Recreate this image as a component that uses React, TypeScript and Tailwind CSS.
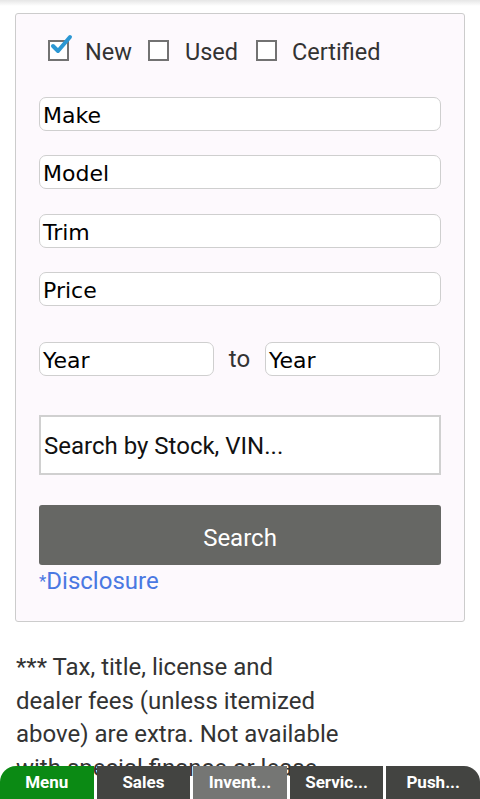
import React from "react";

const roboto = { fontFamily: "Roboto, 'Noto Sans', sans-serif" };
const dejavu = { fontFamily: "'DejaVu Sans', sans-serif" };

function Box({ checked }: { checked?: boolean }) {
  return (
    <span className="relative inline-block w-[21px] h-[22px] shrink-0">
      <span className="absolute left-0 top-[2px] w-[21px] h-[21px] border-2 border-[#727272] bg-white" />
      {checked && (
        <svg className="absolute left-[2px] top-[-6px]" width="24" height="24" viewBox="0 0 24 24">
          <path d="M3 14 L8 19 L20 5" fill="none" stroke="#2b97d3" strokeWidth="4" strokeLinecap="round" strokeLinejoin="round" />
        </svg>
      )}
    </span>
  );
}

function Field({ label, className = "" }: { label: string; className?: string }) {
  return (
    <div
      className={`h-[34px] border border-[#cfcfcf] rounded-[7px] bg-white flex items-center pl-[3px] pt-[2px] text-[22px] text-black ${className}`}
      style={dejavu}
    >
      {label}
    </div>
  );
}

export default function App() {
  return (
    <div className="w-[480px] h-[799px] bg-white relative overflow-hidden" style={roboto}>
      <div className="h-[6px] bg-gradient-to-b from-[#e6e6e6] to-white" />
      <div className="mx-[15px] mt-[7px] h-[609px] border border-[#cccccc] rounded-[3px] bg-[#fdf9fd] px-[23px] pt-[24px]">
        <div className="flex items-center h-[30px] text-[23.5px] text-[#333333]">
          <span className="ml-[9px]"><Box checked /></span>
          <span className="ml-[16px]">New</span>
          <span className="ml-[16px]"><Box /></span>
          <span className="ml-[16px]">Used</span>
          <span className="ml-[18px]"><Box /></span>
          <span className="ml-[15px]">Certified</span>
        </div>
        <div className="mt-[29px] flex flex-col gap-[24px]">
          <Field label="Make" />
          <Field label="Model" />
          <Field label="Trim" className="mt-[1px]" />
          <Field label="Price" />
        </div>
        <div className="mt-[35px] flex items-center">
          <Field label="Year" className="w-[175px]" />
          <span className="w-[51px] text-center text-[24px] text-[#333333]">to</span>
          <Field label="Year" className="w-[175px]" />
        </div>
        <div className="mt-[38px] h-[60px] border-2 border-[#d0d0d0] bg-white flex items-center pl-[3px] pt-[1px] text-[24px] text-[#111111]">
          Search by Stock, VIN...
        </div>
        <button className="mt-[30px] w-full h-[60px] bg-[#666764] rounded-[3px] text-white text-[24px] pt-[5px]" style={roboto}>
          Search
        </button>
        <div className="text-[24px] leading-[32px] text-[#4a78e2]">
          <span className="text-[17px] align-[2px]">*</span>Disclosure
        </div>
      </div>
      <div className="mt-[29px] pl-[16px] text-[24px] leading-[33.5px] text-[#333333]">
        *** Tax, title, license and<br />
        dealer fees (unless itemized<br />
        above) are extra. Not available<br />
        with special finance or lease
      </div>
      <div className="absolute left-0 bottom-0 w-[480px] h-[33px] flex gap-[3px] text-white font-bold text-[17px]">
        <div className="flex-1 bg-[#0b8a14] rounded-tl-[16px] flex items-center justify-center">Menu</div>
        <div className="flex-1 bg-[#434441] flex items-center justify-center">Sales</div>
        <div className="flex-1 bg-[#757674] flex items-center justify-center">Invent...</div>
        <div className="flex-1 bg-[#434441] flex items-center justify-center">Servic...</div>
        <div className="flex-1 bg-[#434441] rounded-tr-[16px] flex items-center justify-center">Push...</div>
      </div>
    </div>
  );
}
